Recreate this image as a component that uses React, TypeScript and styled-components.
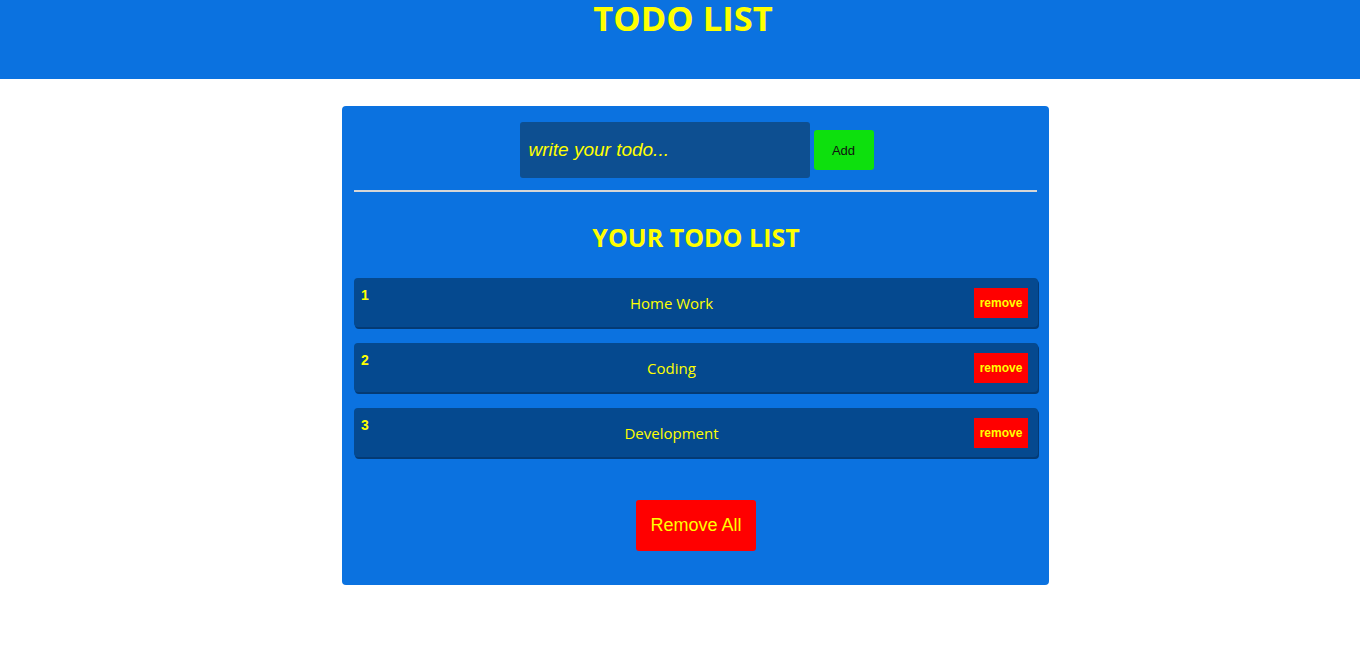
import React from "react";
import styled, { createGlobalStyle } from "styled-components";

const Global = createGlobalStyle`
  html, body { margin: 0; padding: 0; background: #ffffff; }
  body { font-family: "Open Sans", "Noto Sans", sans-serif; }
`;

const Header = styled.header`
  height: 79px;
  background: #0b72e0;
  display: flex;
  justify-content: center;
`;

const Title = styled.h1`
  margin: 0;
  padding-left: 6px;
  font-family: "Open Sans", sans-serif;
  font-size: 34.5px;
  line-height: 36px;
  font-weight: 700;
  color: #ffff00;
`;

const Card = styled.main`
  width: 707px;
  margin: 27px 0 0 342px;
  background: #0b72e0;
  border-radius: 4px;
  padding: 16px 11px 34px 12px;
  box-sizing: border-box;
  display: flex;
  flex-direction: column;
`;

const InputRow = styled.div`
  display: flex;
  justify-content: center;
  align-items: center;
  gap: 4px;
  padding: 0 0 12px 2px;
  border-bottom: 2px solid #d6d6d6;
  margin-right: 1px;
`;

const Input = styled.input`
  width: 290px;
  height: 56px;
  box-sizing: border-box;
  border: none;
  outline: none;
  border-radius: 3px;
  background: #0d4f91;
  padding: 0 9px;
  font-family: "Liberation Sans", Arial, sans-serif;
  font-style: italic;
  font-size: 19px;
  color: #ffff00;
  &::placeholder { color: #ffff00; opacity: 1; }
`;

const AddButton = styled.button`
  width: 60px;
  height: 40px;
  border: none;
  border-radius: 3px;
  background: #0de00d;
  color: #111;
  font-family: "Liberation Sans", Arial, sans-serif;
  font-size: 13px;
`;

const ListTitle = styled.h2`
  margin: 30px 0 26px;
  text-align: center;
  font-family: "Open Sans", sans-serif;
  font-size: 25px;
  line-height: 30px;
  font-weight: 700;
  color: #ffff00;
`;

const List = styled.ul`
  list-style: none;
  margin: 0;
  padding: 0;
  display: flex;
  flex-direction: column;
  gap: 16px;
`;

const Item = styled.li`
  display: flex;
  align-items: center;
  height: 49px;
  padding: 0 10px 0 7px;
  box-sizing: border-box;
  background: #05498f;
  border-radius: 4px;
  box-shadow: 1px 2px 0 #043a74;
`;

const Num = styled.span`
  align-self: flex-start;
  margin-top: 9px;
  font-family: "Liberation Sans", Arial, sans-serif;
  font-weight: 700;
  font-size: 14px;
  color: #ffff00;
  width: 8px;
`;

const Text = styled.span`
  flex: 1;
  text-align: center;
  font-family: "Open Sans", sans-serif;
  font-size: 15px;
  color: #ffff00;
`;

const RemoveButton = styled.button`
  width: 54px;
  height: 30px;
  border: none;
  padding: 0;
  background: #ff0000;
  color: #ffff00;
  font-family: "Liberation Sans", Arial, sans-serif;
  font-weight: 700;
  font-size: 12px;
`;

const Footer = styled.div`
  display: flex;
  justify-content: center;
  margin-top: 43px;
`;

const RemoveAll = styled.button`
  width: 120px;
  height: 51px;
  border: none;
  border-radius: 3px;
  background: #ff0000;
  color: #ffff00;
  font-family: "Liberation Sans", Arial, sans-serif;
  font-size: 18px;
`;

const todos = ["Home Work", "Coding", "Development"];

export default function App() {
  return (
    <>
      <Global />
      <Header>
        <Title>TODO LIST</Title>
      </Header>
      <Card>
        <InputRow>
          <Input placeholder="write your todo..." />
          <AddButton>Add</AddButton>
        </InputRow>
        <ListTitle>YOUR TODO LIST</ListTitle>
        <List>
          {todos.map((t, i) => (
            <Item key={t}>
              <Num>{i + 1}</Num>
              <Text>{t}</Text>
              <RemoveButton>remove</RemoveButton>
            </Item>
          ))}
        </List>
        <Footer>
          <RemoveAll>Remove All</RemoveAll>
        </Footer>
      </Card>
    </>
  );
}
